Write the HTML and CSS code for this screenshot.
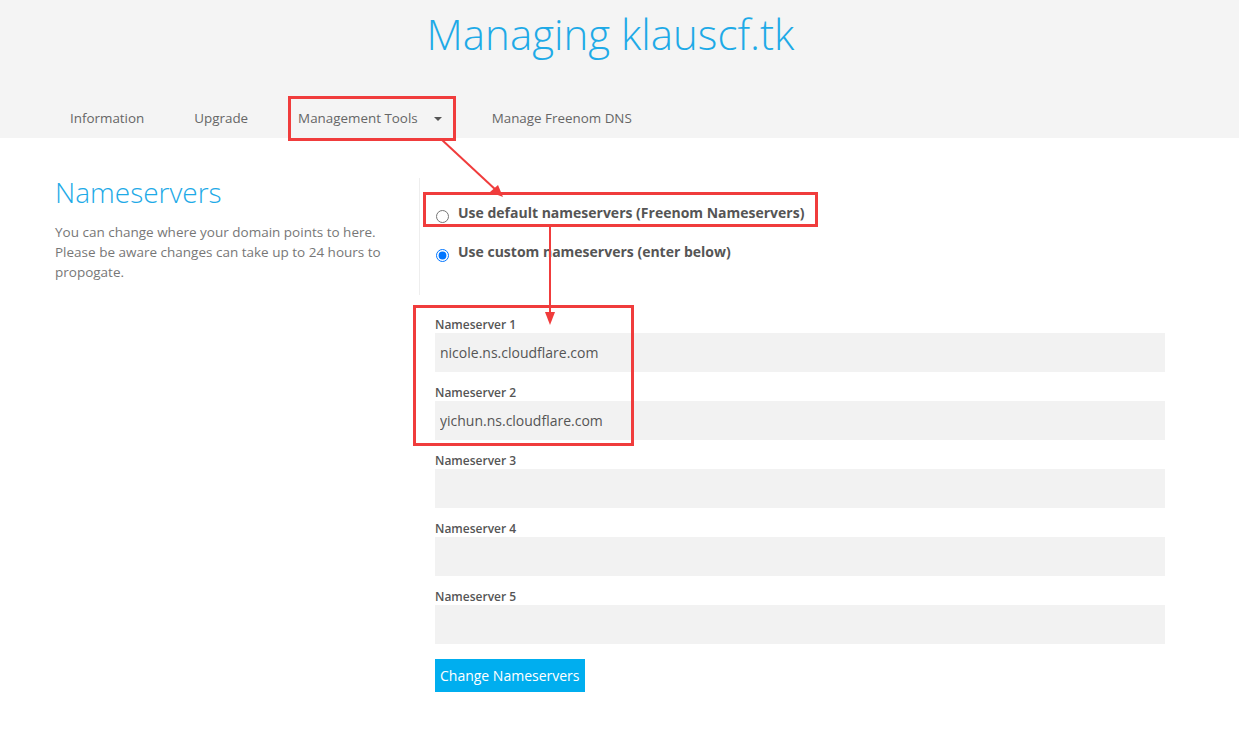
FILE: index.html
```html
<!DOCTYPE html>
<html>
<head>
<meta charset="utf-8">
<link rel="stylesheet" href="styles.css">
</head>
<body>
<header class="top">
  <h1 class="title">Managing klauscf.tk</h1>
  <nav class="nav">
    <span class="nav-item">Information</span>
    <span class="nav-item">Upgrade</span>
    <span class="nav-item">Management Tools <span class="caret"></span></span>
    <span class="nav-item">Manage Freenom DNS</span>
  </nav>
</header>
<main class="main">
  <section class="side">
    <h2 class="side-title">Nameservers</h2>
    <p class="side-text">You can change where your domain points to here. Please be aware changes can take up to 24 hours to propogate.</p>
  </section>
  <section class="content">
    <div class="choices">
      <label class="choice"><input type="radio" name="ns" class="radio"><span>Use default nameservers (Freenom Nameservers)</span></label>
      <label class="choice"><input type="radio" name="ns" class="radio" checked><span>Use custom nameservers (enter below)</span></label>
    </div>
    <form class="fields">
      <div class="field"><label class="field-label">Nameserver 1</label><input class="field-input" type="text" value="nicole.ns.cloudflare.com"></div>
      <div class="field"><label class="field-label">Nameserver 2</label><input class="field-input" type="text" value="yichun.ns.cloudflare.com"></div>
      <div class="field"><label class="field-label">Nameserver 3</label><input class="field-input" type="text" value=""></div>
      <div class="field"><label class="field-label">Nameserver 4</label><input class="field-input" type="text" value=""></div>
      <div class="field"><label class="field-label">Nameserver 5</label><input class="field-input" type="text" value=""></div>
      <button class="btn" type="button">Change Nameservers</button>
    </form>
  </section>
</main>
<div class="mark mark-nav"></div>
<div class="mark mark-radio"></div>
<div class="mark mark-fields"></div>
<svg class="arrows" width="1239" height="733" viewBox="0 0 1239 733">
  <line x1="441" y1="139" x2="497" y2="191" stroke="#f03c3c" stroke-width="2"/>
  <polygon points="503,197 490,192 498,185" fill="#f03c3c"/>
  <line x1="550" y1="227" x2="550" y2="314" stroke="#f03c3c" stroke-width="2"/>
  <polygon points="550,325 545,312 555,312" fill="#f03c3c"/>
</svg>
</body>
</html>
```
FILE: styles.css
```css
html, body {
  margin: 0;
  padding: 0;
  background: #fff;
  font-family: "Open Sans", "Liberation Sans", sans-serif;
}
.top {
  background: #f4f4f4;
  height: 138px;
  box-sizing: border-box;
  padding-top: 4px;
}
.title {
  margin: 0;
  text-align: center;
  font-size: 42px;
  line-height: 60px;
  font-weight: 300;
  color: #1eaae7;
  padding-right: 18px;
}
.nav {
  display: flex;
  gap: 50px;
  padding-left: 70px;
  margin-top: 44px;
}
.nav-item {
  font-size: 13.4px;
  line-height: 20px;
  color: #666;
  display: flex;
  align-items: center;
}
.caret {
  display: inline-block;
  width: 0;
  height: 0;
  margin-left: 16px;
  border-left: 4px solid transparent;
  border-right: 4px solid transparent;
  border-top: 4px solid #555;
  margin-top: 2px;
}
.main {
  display: grid;
  grid-template-columns: 364px 760px;
  padding-left: 55px;
  padding-top: 37px;
}
.side-title {
  margin: 0;
  font-size: 28px;
  line-height: 34px;
  font-weight: 300;
  color: #1eaae7;
}
.side-text {
  margin: 13px 0 0;
  font-size: 13.5px;
  line-height: 20px;
  color: #777;
  width: 345px;
}
.content {
  padding-top: 3px;
}
.choices {
  border-left: 1px solid #eee;
  padding: 25px 0 33px 16px;
  display: flex;
  flex-direction: column;
  gap: 19px;
}
.choice {
  display: flex;
  align-items: flex-start;
  height: 20px;
  font-size: 14px;
  line-height: 20px;
  font-weight: 700;
  color: #555;
}
.radio {
  margin: 7px 9px 0 0;
  width: 13px;
  height: 13px;
  flex: none;
}
.fields {
  padding: 22px 0 0 16px;
  display: flex;
  flex-direction: column;
  align-items: flex-start;
}
.field {
  display: flex;
  flex-direction: column;
  width: 730px;
  margin-bottom: 13px;
}
.field-label {
  font-size: 12px;
  line-height: 16px;
  font-weight: 600;
  color: #555;
}
.field-input {
  height: 39px;
  box-sizing: border-box;
  border: 0;
  margin: 0;
  background: #f2f2f2;
  padding: 0 5px;
  font-family: "Open Sans", "Liberation Sans", sans-serif;
  font-size: 14px;
  color: #555;
  outline: none;
}
.btn {
  margin-top: 2px;
  height: 33px;
  border: 0;
  background: #00aeef;
  color: #fff;
  font-family: "Open Sans", "Liberation Sans", sans-serif;
  font-size: 14px;
  padding: 0 5px;
  cursor: pointer;
}
.mark {
  position: absolute;
  border: 3px solid #f03c3c;
  box-sizing: border-box;
  pointer-events: none;
}
.mark-nav { left: 288px; top: 96px; width: 168px; height: 45px; }
.mark-radio { left: 423px; top: 192px; width: 395px; height: 35px; }
.mark-fields { left: 413px; top: 305px; width: 221px; height: 141px; }
.arrows {
  position: absolute;
  left: 0;
  top: 0;
  pointer-events: none;
}
```
